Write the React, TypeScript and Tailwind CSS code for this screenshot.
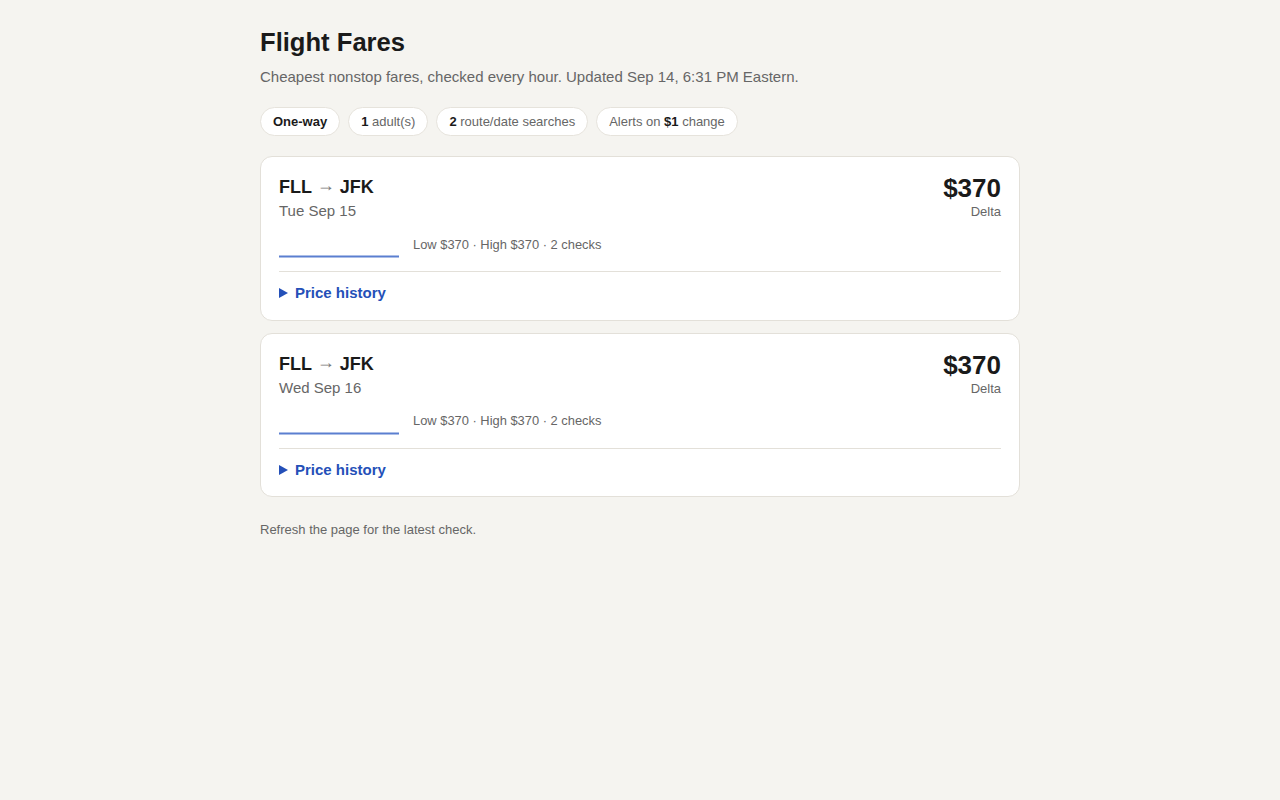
import React from "react";

type Fare = { date: string; price: string; airline: string };

const fares: Fare[] = [
  { date: "Tue Sep 15", price: "$370", airline: "Delta" },
  { date: "Wed Sep 16", price: "$370", airline: "Delta" },
];

function Pill({ children, strong }: { children: React.ReactNode; strong?: boolean }) {
  return (
    <span
      className={
        "inline-flex h-[29px] items-center whitespace-pre rounded-full border border-[#e6e3dc] bg-white px-3 text-[13px] " +
        (strong ? "font-bold text-[#1a1a1a]" : "text-[#666]")
      }
    >
      {children}
    </span>
  );
}

function FareCard({ fare }: { fare: Fare }) {
  return (
    <div className="rounded-xl border border-[#e3e0d9] bg-white px-[18px] pt-[16px] pb-[15px]">
      <div className="flex items-start justify-between">
        <div className="pt-[1px]">
          <div className="text-[18px] font-bold leading-[26px] text-[#1a1a1a]">
            FLL <span className="relative -top-[2px] font-normal text-[#777]">→</span> JFK
          </div>
          <div className="text-[15px] leading-[22px] text-[#666]">{fare.date}</div>
        </div>
        <div className="text-right">
          <div className="text-[26px] font-bold leading-[30px] text-[#1a1a1a]">{fare.price}</div>
          <div className="text-[13px] leading-[17px] text-[#666]">{fare.airline}</div>
        </div>
      </div>
      <div className="mt-[12px] flex items-center gap-[14px]">
        <svg width="120" height="24" viewBox="0 0 120 24" className="block">
          <line x1="0" y1="22.5" x2="120" y2="22.5" stroke="#5b7fd0" strokeWidth="2" />
        </svg>
        <div className="-mt-[3px] text-[12.9px] text-[#666]">Low $370 · High $370 · 2 checks</div>
      </div>
      <div className="mt-[13px] border-t border-[#e3e0d9] pt-[10px]">
        <button className="flex items-center gap-[7px] text-[15px] font-bold text-[#2450b8]">
          <svg width="9" height="10" viewBox="0 0 9 10">
            <path d="M0 0 L9 5 L0 10 Z" fill="#2450b8" />
          </svg>
          Price history
        </button>
      </div>
    </div>
  );
}

export default function App() {
  return (
    <main className="min-h-screen bg-[#f5f4f0] font-['Liberation_Sans',Arial,sans-serif]">
      <div className="mx-auto w-[760px] pt-[25px]">
        <h1 className="text-[25.6px] font-bold leading-[34px] text-[#1a1a1a]">Flight Fares</h1>
        <p className="mt-[7px] text-[15px] leading-[22px] text-[#666]">
          Cheapest nonstop fares, checked every hour. Updated Sep 14, 6:31 PM Eastern.
        </p>
        <div className="mt-[19px] flex gap-2">
          <Pill strong>One-way</Pill>
          <Pill>
            <b className="text-[#1a1a1a]">1</b> adult(s)
          </Pill>
          <Pill>
            <b className="text-[#1a1a1a]">2</b> route/date searches
          </Pill>
          <Pill>
            Alerts on <b className="text-[#1a1a1a]">$1</b> change
          </Pill>
        </div>
        <div className="mt-[20px] flex flex-col gap-3">
          {fares.map((f) => (
            <FareCard key={f.date} fare={f} />
          ))}
        </div>
        <p className="mt-[23px] text-[13px] text-[#666]">Refresh the page for the latest check.</p>
      </div>
    </main>
  );
}
